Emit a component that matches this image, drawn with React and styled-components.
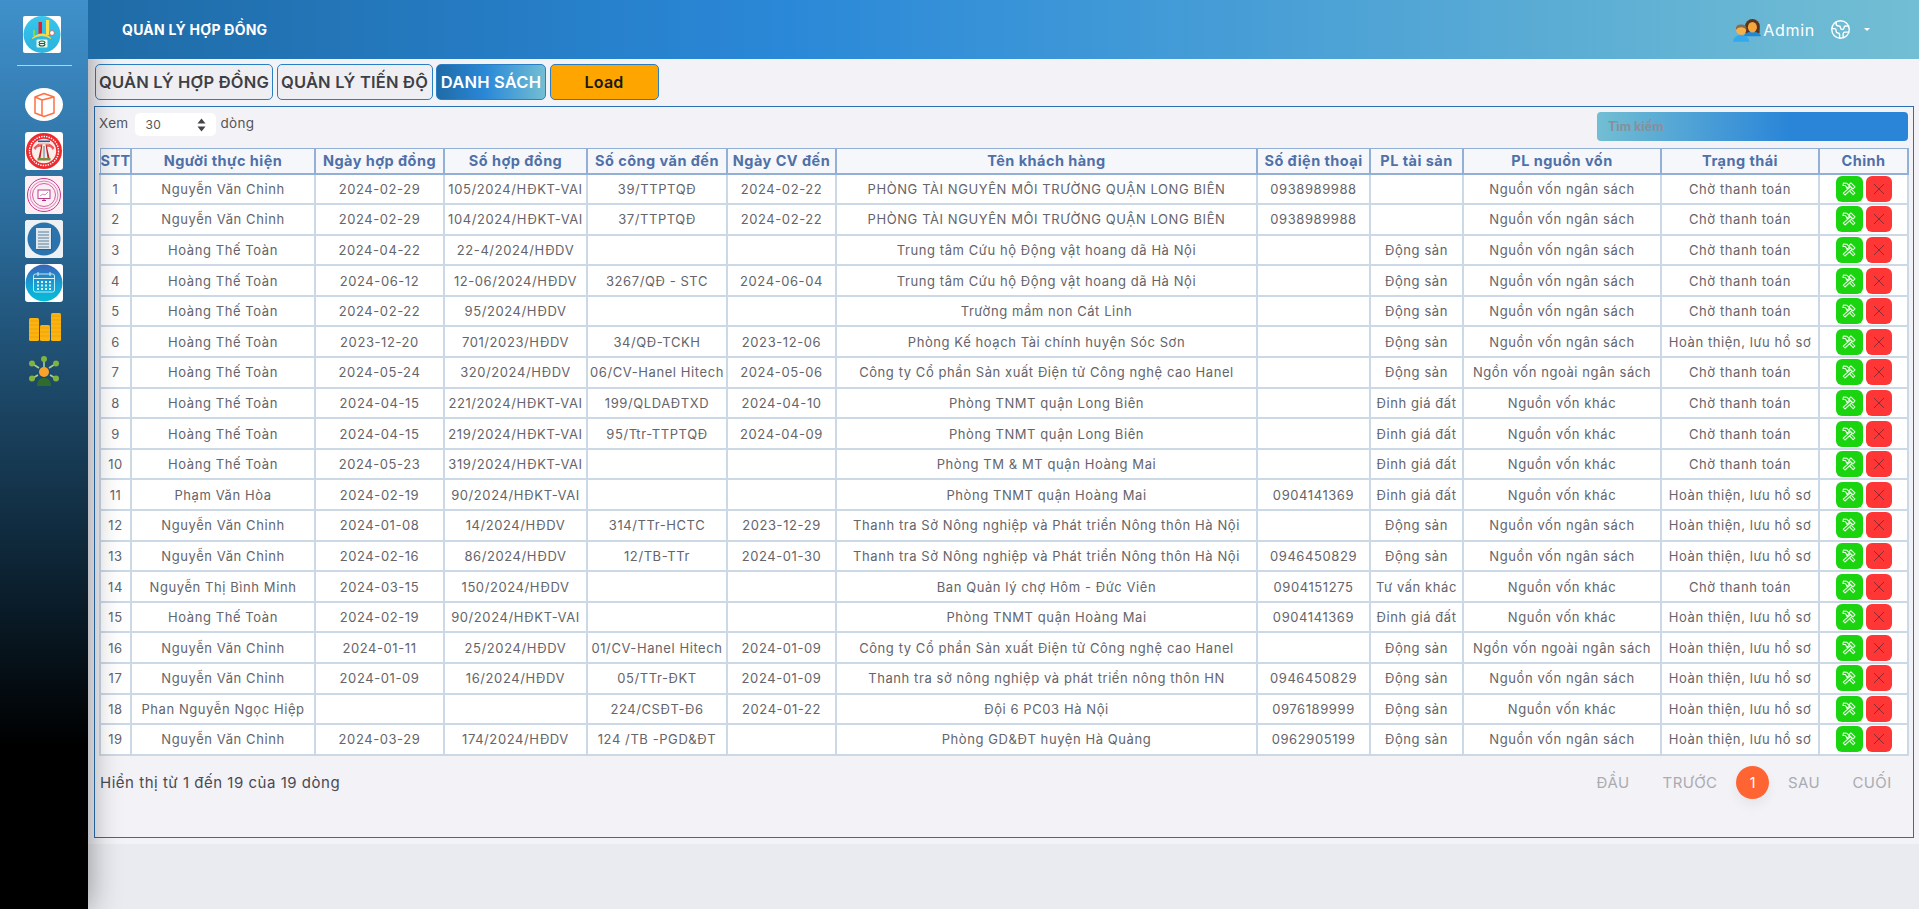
import React from "react";
import styled, { createGlobalStyle } from "styled-components";
import { Earth } from "lucide-react";

const Global = createGlobalStyle`
  html, body { margin: 0; padding: 0; background: #e9ebf0; }
  body { font-family: Inter, "Noto Sans", sans-serif; overflow: hidden; }
  * { box-sizing: border-box; }
`;

const Shell = styled.div`
  display: flex;
  width: 1919px;
  height: 909px;
  overflow: hidden;
`;

const Sidebar = styled.aside`
  width: 88px;
  flex: none;
  z-index: 2;
  display: flex;
  flex-direction: column;
  align-items: center;
  padding-top: 16px;
  background: linear-gradient(180deg, #3f90cb 0%, #2a6a99 25%, #1b4462 45%, #0b1f2d 65%, #000 82%);
  box-shadow: 0 0 32px rgba(0, 0, 0, 0.42);
`;

const Logo = styled.div`
  width: 38px;
  height: 37px;
  margin-right: 4px;
  background: #fff;
  border-radius: 2px;
  flex: none;
  svg { display: block; }
`;

const Divider = styled.hr`
  width: 55px;
  height: 1px;
  margin: 12px 0 22px;
  border: 0;
  background: #b5d3e8;
`;

const NavList = styled.nav`
  display: flex;
  flex-direction: column;
  align-items: center;
  gap: 6px;
`;

const NavTile = styled.div`
  width: 38px;
  height: ${(p) => p.$h || 38}px;
  border-radius: ${(p) => p.$round || "3px"};
  background: ${(p) => p.$bg || "#fff"};
  flex: none;
  margin-bottom: ${(p) => p.$mb || 0}px;
  svg { display: block; }
`;

const Main = styled.div`
  flex: 1;
  min-width: 0;
  display: flex;
  flex-direction: column;
`;

const Header = styled.header`
  height: 59px;
  flex: none;
  z-index: 3;
  display: flex;
  align-items: center;
  padding: 0 49px 0 34px;
  background: linear-gradient(90deg, #1f6ba6 0%, #2a88d8 38%, #72bed3 100%);
  color: #fff;
`;

const Title = styled.div`
  flex: 1;
  font-size: 14px;
  font-weight: 700;
  letter-spacing: 0.25px;
`;

const UserName = styled.span`
  font-size: 16px;
  letter-spacing: 0.7px;
  margin: 0 15px 0 2px;
`;

const Caret = styled.i`
  width: 0;
  height: 0;
  margin-left: 13px;
  border-left: 3px solid transparent;
  border-right: 3px solid transparent;
  border-top: 3px solid #fff;
`;

const Content = styled.main`
  height: 785px;
  flex: none;
  padding: 5px 5px 0 6px;
  background: #f2f2f7;
`;

const TabBar = styled.div`
  display: flex;
  gap: 3.5px;
  height: 36px;
  margin: 0 0 6px 1px;
`;

const Tab = styled.button`
  width: ${(p) => p.$w}px;
  height: 36px;
  padding: 0;
  border: 1px solid #2a7fc4;
  border-radius: 5px;
  font-family: inherit;
  font-size: 16.5px;
  font-weight: 600;
  letter-spacing: 0.2px;
  white-space: nowrap;
  color: #3f3f46;
  background: #efeff3;
`;

const ActiveTab = styled(Tab)`
  color: #fff;
  border-color: #2a7fc4;
  background: linear-gradient(90deg, #1f6ba6 0%, #2a88d8 45%, #72bed3 100%);
`;

const LoadButton = styled(Tab)`
  font-size: 16px;
  color: #1a1a1a;
  background: #ffa500;
`;

const Panel = styled.section`
  height: 732px;
  border: 1px solid #2a6fb0;
  padding: 5px 5px 0 4px;
  display: flex;
  flex-direction: column;
`;

const TopRow = styled.div`
  display: flex;
  justify-content: space-between;
  height: 30px;
  margin-bottom: 6px;
`;

const LengthControl = styled.label`
  display: flex;
  align-items: flex-start;
  gap: 4px;
  padding-top: 1px;
  color: #555;
  font-size: 13.5px;
  letter-spacing: 0.3px;
  line-height: 20px;
`;

const FakeSelect = styled.span`
  width: 81px;
  height: 23px;
  margin: 0 0 0 3px;
  padding: 0 10px;
  display: flex;
  align-items: center;
  justify-content: space-between;
  background: #fff;
  border-radius: 5px;
  font-size: 12px;
  color: #555;
`;

const SearchInput = styled.input`
  width: 311px;
  height: 29px;
  padding: 0 11px;
  border: 0;
  border-radius: 4px;
  outline: none;
  font-family: inherit;
  font-size: 12.5px;
  font-weight: 700;
  background: linear-gradient(90deg, #72bed3 0%, #2a85d8 62%, #2a85d8 100%);
  &::placeholder { color: #8a8f99; opacity: 1; }
`;

const Table = styled.table`
  width: 1808px;
  table-layout: fixed;
  border-collapse: collapse;
  background: #fff;
`;

const HeadCell = styled.th`
  height: 25px;
  padding: 0;
  background: #f6f7fa;
  border: 2px solid #92b0d6;
  border-top-width: 1px;
  border-left-width: ${(p) => (p.$first ? 1 : 2)}px;
  font-size: 14.5px;
  font-weight: 700;
  white-space: nowrap;
  text-align: center;
  color: #4f70a8;
  letter-spacing: 0.45px;
`;

const Row = styled.tr`
  height: 30.6px;
`;

const Cell = styled.td`
  padding: 0;
  border: 2px solid #cbd8e6;
  font-size: 13px;
  font-weight: 400;
  white-space: nowrap;
  text-align: center;
  color: #64646a;
  letter-spacing: 0.58px;
`;

const ActionWrap = styled.div`
  display: flex;
  justify-content: center;
  gap: 3px;
`;

const ActionBtn = styled.button`
  width: ${(p) => p.$w}px;
  height: 26px;
  padding: 0;
  border: 0;
  border-radius: 6px;
  display: flex;
  align-items: center;
  justify-content: center;
  background: ${(p) => p.$bg};
`;

const Footer = styled.div`
  display: flex;
  align-items: center;
  justify-content: space-between;
  margin-top: 7px;
  padding-left: 1px;
  height: 40px;
`;

const Info = styled.div`
  font-size: 15px;
  color: #4a4a52;
  letter-spacing: 0.52px;
`;

const Pager = styled.div`
  display: flex;
  align-items: center;
  margin-right: 1px;
`;

const PageLink = styled.span`
  width: ${(p) => p.$w}px;
  text-align: center;
  font-size: 15px;
  letter-spacing: 0.4px;
  color: #ababb0;
`;

const PageCurrent = styled.span`
  width: 33px;
  height: 33px;
  margin: 0 2px;
  border-radius: 50%;
  display: flex;
  align-items: center;
  justify-content: center;
  font-size: 14px;
  color: #fff;
  background: #ff6533;
  box-shadow: 0 6px 12px rgba(0, 0, 0, 0.06);
`;

const cols = [31, 184, 129, 143, 140, 109, 421, 113, 93, 198, 158, 89];
const heads = ["STT", "Người thực hiện", "Ngày hợp đồng", "Số hợp đồng", "Số công văn đến", "Ngày CV đến", "Tên khách hàng", "Số điện thoại", "PL tài sản", "PL nguồn vốn", "Trạng thái", "Chỉnh"];

const C = "Nguyễn Văn Chỉnh";
const T = "Hoàng Thế Toàn";
const NS = "Nguồn vốn ngân sách";
const NK = "Nguồn vốn khác";
const NN = "Ngồn vốn ngoài ngân sách";
const W = "Chờ thanh toán";
const H = "Hoàn thiện, lưu hồ sơ";
const DS = "Động sản";
const DG = "Đinh giá đất";
const LB = "PHÒNG TÀI NGUYÊN MÔI TRƯỜNG QUẬN LONG BIÊN";
const rows = [
  [C, "2024-02-29", "105/2024/HĐKT-VAI", "39/TTPTQĐ", "2024-02-22", LB, "0938989988", "", NS, W],
  [C, "2024-02-29", "104/2024/HĐKT-VAI", "37/TTPTQĐ", "2024-02-22", LB, "0938989988", "", NS, W],
  [T, "2024-04-22", "22-4/2024/HĐDV", "", "", "Trung tâm Cứu hộ Động vật hoang dã Hà Nội", "", DS, NS, W],
  [T, "2024-06-12", "12-06/2024/HĐDV", "3267/QĐ - STC", "2024-06-04", "Trung tâm Cứu hộ Động vật hoang dã Hà Nội", "", DS, NS, W],
  [T, "2024-02-22", "95/2024/HĐDV", "", "", "Trường mầm non Cát Linh", "", DS, NS, W],
  [T, "2023-12-20", "701/2023/HĐDV", "34/QĐ-TCKH", "2023-12-06", "Phòng Kế hoạch Tài chính huyện Sóc Sơn", "", DS, NS, H],
  [T, "2024-05-24", "320/2024/HĐDV", "06/CV-Hanel Hitech", "2024-05-06", "Công ty Cổ phần Sản xuất Điện tử Công nghệ cao Hanel", "", DS, NN, W],
  [T, "2024-04-15", "221/2024/HĐKT-VAI", "199/QLDAĐTXD", "2024-04-10", "Phòng TNMT quận Long Biên", "", DG, NK, W],
  [T, "2024-04-15", "219/2024/HĐKT-VAI", "95/Ttr-TTPTQĐ", "2024-04-09", "Phòng TNMT quận Long Biên", "", DG, NK, W],
  [T, "2024-05-23", "319/2024/HĐKT-VAI", "", "", "Phòng TM & MT quận Hoàng Mai", "", DG, NK, W],
  ["Phạm Văn Hòa", "2024-02-19", "90/2024/HĐKT-VAI", "", "", "Phòng TNMT quận Hoàng Mai", "0904141369", DG, NK, H],
  [C, "2024-01-08", "14/2024/HĐDV", "314/TTr-HCTC", "2023-12-29", "Thanh tra Sở Nông nghiệp và Phát triển Nông thôn Hà Nội", "", DS, NS, H],
  [C, "2024-02-16", "86/2024/HĐDV", "12/TB-TTr", "2024-01-30", "Thanh tra Sở Nông nghiệp và Phát triển Nông thôn Hà Nội", "0946450829", DS, NS, H],
  ["Nguyễn Thị Bình Minh", "2024-03-15", "150/2024/HĐDV", "", "", "Ban Quản lý chợ Hôm - Đức Viên", "0904151275", "Tư vấn khác", NK, W],
  [T, "2024-02-19", "90/2024/HĐKT-VAI", "", "", "Phòng TNMT quận Hoàng Mai", "0904141369", DG, NK, H],
  [C, "2024-01-11", "25/2024/HĐDV", "01/CV-Hanel Hitech", "2024-01-09", "Công ty Cổ phần Sản xuất Điện tử Công nghệ cao Hanel", "", DS, NN, H],
  [C, "2024-01-09", "16/2024/HĐDV", "05/TTr-ĐKT", "2024-01-09", "Thanh tra sở nông nghiệp và phát triển nông thôn HN", "0946450829", DS, NS, H],
  ["Phan Nguyễn Ngọc Hiệp", "", "", "224/CSĐT-Đ6", "2024-01-22", "Đội 6 PC03 Hà Nội", "0976189999", DS, NK, H],
  [C, "2024-03-29", "174/2024/HĐDV", "124 /TB -PGD&ĐT", "", "Phòng GD&ĐT huyện Hà Quảng", "0962905199", DS, NS, H],
];

const LogoIcon = () => (
  <svg width="38" height="37" viewBox="0 0 38 37">
    <defs>
      <linearGradient id="lg" x1="0" y1="0" x2="0" y2="1">
        <stop offset="0" stopColor="#38c6ee" />
        <stop offset="1" stopColor="#26b4e0" />
      </linearGradient>
    </defs>
    <circle cx="19" cy="18.5" r="18.5" fill="url(#lg)" />
    <rect x="10" y="14" width="2" height="6" fill="#7ed957" />
    <rect x="15.5" y="6" width="3.5" height="13" fill="#e3202a" />
    <rect x="23" y="4" width="3.2" height="15" fill="#f7e04a" />
    <path d="M9 22 Q19 13 28 22 L28 23 Q19 17 9 23Z" fill="#f9d94a" />
    <circle cx="29" cy="17" r="2.4" fill="#fff" stroke="#d9534f" strokeWidth="0.8" />
    <path d="M7 23 H31 V30 Q25 36 19 36 Q13 36 7 30Z" fill="#2fb7df" />
    <rect x="13.5" y="23.5" width="11" height="8" rx="1" fill="#eaf7f0" />
    <path d="M16 27 a3 2 0 0 1 6 0 M22 28 a3 2 0 0 1-6 0 M16 27.5 H22" stroke="#14633c" strokeWidth="1.1" fill="none" />
  </svg>
);

const CubeIcon = () => (
  <svg width="38" height="33" viewBox="0 0 38 33">
    <g fill="none" stroke="#ff7043" strokeWidth="1.5" strokeLinejoin="round">
      <path d="M10 9 L19 5.5 L29 9 V25 L19 28.5 L10 25 Z" />
      <path d="M10 9 L17 12 V28 M17 12 L29 9" />
    </g>
  </svg>
);

const SealIcon = () => (
  <svg width="38" height="38" viewBox="0 0 38 38">
    <circle cx="19" cy="19" r="18" fill="#ee2a2f" />
    <circle cx="19" cy="19" r="14.5" fill="none" stroke="#fff" strokeWidth="1.4" strokeDasharray="1.4 1.1" />
    <circle cx="19" cy="19" r="12.2" fill="#fbeee8" />
    <path d="M8.5 16 Q13 10 17 12 L16 15 Q12 14 10.5 18Z M29.5 16 Q25 10 21 12 L22 15 Q26 14 27.5 18Z" fill="#ef5a5e" />
    <rect x="13" y="8.5" width="12" height="1.6" fill="#2456a6" />
    <path d="M14 11 H24 V12.4 H14Z" fill="#e8c9a0" />
    <path d="M16.5 12.5 L13.5 26 H15.5 L17.5 12.5Z M21.5 12.5 L24.5 26 H22.5 L20.5 12.5Z" fill="#c7202a" />
    <path d="M17.8 12.5 H18.6 L17.6 26 H16.4Z M20.2 12.5 H19.4 L20.4 26 H21.6Z" fill="#f4e6c8" />
    <path d="M18.6 14 H19.4 V26 H18.6Z" fill="#2456a6" />
    <path d="M12.5 26 H25.5 V28.5 H12.5Z" fill="#6f8f4a" />
    <circle cx="19" cy="27.2" r="1.3" fill="#b5762a" />
  </svg>
);

const TrainingIcon = () => (
  <svg width="38" height="38" viewBox="0 0 38 38">
    <rect width="38" height="38" rx="3" fill="#fdeef4" />
    <g fill="none" stroke="#c43a8b">
      <circle cx="19" cy="19" r="16.5" strokeWidth="1" />
      <circle cx="19" cy="19" r="14" strokeWidth="0.6" />
      <circle cx="19" cy="19" r="11.5" strokeWidth="0.8" />
    </g>
    <rect x="13" y="14" width="12" height="8.5" fill="#fff" stroke="#b02a7f" strokeWidth="0.9" />
    <path d="M15 20 L18 18 L20 19 L23 16" fill="none" stroke="#d24b9a" strokeWidth="0.7" />
    <path d="M17 24.5 H21 M19 22.5 V24.5" stroke="#b02a7f" strokeWidth="1" />
  </svg>
);

const DocIcon = () => (
  <svg width="38" height="38" viewBox="0 0 38 38">
    <rect width="38" height="38" rx="3" fill="#eef1f4" />
    <circle cx="19" cy="19" r="16.5" fill="#2a73ad" />
    <rect x="12" y="9" width="15" height="21" fill="#2f5f86" />
    <rect x="11" y="8" width="15" height="21" fill="#dfe8ef" />
    <path d="M13 12 H24 M13 15 H24 M13 18 H24 M13 21 H24 M13 24 H24 M13 27 H24" stroke="#5c7f9a" strokeWidth="1.1" />
  </svg>
);

const CalendarIcon = () => (
  <svg width="38" height="38" viewBox="0 0 38 38">
    <defs>
      <linearGradient id="cg" x1="0" y1="0" x2="0" y2="1">
        <stop offset="0" stopColor="#3b63b8" />
        <stop offset="0.6" stopColor="#12a6d6" />
        <stop offset="1" stopColor="#06bcd6" />
      </linearGradient>
    </defs>
    <circle cx="19" cy="19" r="18.5" fill="url(#cg)" />
    <rect x="8.5" y="10" width="21" height="18" rx="2" fill="none" stroke="#bfe9f2" strokeWidth="1" />
    <path d="M8.5 14.5 H29.5 M13 8 V12 M25 8 V12" stroke="#d8f3f8" strokeWidth="1" />
    <g fill="#d8f3f8">
      {[17, 20.5, 24].map((y) =>
        [12, 16, 20, 24].map((x) => <rect key={`${x}-${y}`} x={x} y={y} width="2" height="2" />)
      )}
    </g>
  </svg>
);

const CoinsIcon = () => (
  <svg width="38" height="28" viewBox="0 0 38 28">
    <g fill="#fbb40f">
      <rect x="4" y="5" width="10" height="23" rx="1.5" />
      <rect x="15" y="12" width="10" height="16" rx="1.5" />
      <rect x="26" y="0" width="10" height="28" rx="1.5" />
    </g>
    <g stroke="#e8960a" strokeWidth="0.6">
      <path d="M4 8 H14 M4 12 H14 M4 16 H14 M4 20 H14 M4 24 H14" />
      <path d="M15 15 H25 M15 19 H25 M15 23 H25" />
      <path d="M26 3 H36 M26 7 H36 M26 11 H36 M26 15 H36 M26 19 H36 M26 23 H36" />
    </g>
  </svg>
);

const NetworkIcon = () => (
  <svg width="38" height="30" viewBox="0 0 38 30">
    <g stroke="#a8cf8e" strokeWidth="1.6">
      <path d="M19 3 V11 M7 7.5 L14 12 M31 7.5 L24 12 M7 22.5 L13 19 M31 22.5 L25 19" />
    </g>
    <g fill="#7fb23f">
      <circle cx="19" cy="3" r="3" />
      <circle cx="7" cy="7.5" r="3" />
      <circle cx="31" cy="7.5" r="3" />
      <circle cx="7" cy="22.5" r="3" />
      <circle cx="31" cy="22.5" r="3" />
    </g>
    <circle cx="19" cy="16" r="5" fill="#f9a32b" />
    <path d="M12 30 Q12 22 19 22 Q26 22 26 30Z" fill="#2f6b2a" />
  </svg>
);

const AvatarsIcon = () => (
  <svg width="28" height="24" viewBox="0 0 31 26">
    <circle cx="21.5" cy="9" r="8.2" fill="#5c3418" />
    <rect x="13.5" y="9" width="16" height="9" rx="3" fill="#5c3418" />
    <path d="M12 20 Q13 15 21.5 15 Q30 15 31 20Z" fill="#1f87d6" />
    <ellipse cx="21.5" cy="10" rx="5" ry="5.8" fill="#f7a63e" />
    <path d="M0 26 Q1 18.5 9 18.5 Q17 18.5 18 26Z" fill="#34a8ee" />
    <circle cx="9" cy="13" r="5.6" fill="#f7b04e" />
    <path d="M3.2 13 Q2.6 7 9 7 Q15.4 7 14.8 13 Q13 9.8 9 10 Q5 9.8 3.2 13Z" fill="#8a6a4c" />
  </svg>
);

const ToolIcon = () => (
  <svg width="14" height="14" viewBox="0 0 14 14">
    <g fill="#19d40f" stroke="#e8ffe4" strokeWidth="1.05" strokeLinejoin="round">
      <path d="M4.4 5.6 L6 4 L12.9 11 L11.2 12.7 Z" />
      <path d="M1.4 1.1 L5 1.3 L7.6 3.9 L5.3 6.2 L3.4 3.6 L0.9 3.4 Z" />
      <path d="M9.1 4.3 L10.6 5.9 L3 13 L1.2 11.2 Z" />
      <path d="M8.9 0.8 L13 4.9 L11 6.9 L6.9 2.8 Z" />
    </g>
  </svg>
);

const CloseIcon = () => (
  <svg width="12" height="12" viewBox="0 0 12 12">
    <path d="M1 1 L11 11 M11 1 L1 11" stroke="#8c2c34" strokeWidth="1" />
  </svg>
);

const UpDown = () => (
  <svg width="9" height="14" viewBox="0 0 9 14">
    <path d="M4.5 0.5 L8.5 5.5 H0.5Z M4.5 13.5 L8.5 8.5 H0.5Z" fill="#444" />
  </svg>
);

export default function App() {
  return (
    <Shell>
      <Global />
      <Sidebar>
        <Logo><LogoIcon /></Logo>
        <Divider />
        <NavList>
          <NavTile $h={33} $round="50% / 50%" $mb={5}><CubeIcon /></NavTile>
          <NavTile><SealIcon /></NavTile>
          <NavTile><TrainingIcon /></NavTile>
          <NavTile><DocIcon /></NavTile>
          <NavTile $mb={5}><CalendarIcon /></NavTile>
          <NavTile $h={28} $bg="transparent" $mb={9}><CoinsIcon /></NavTile>
          <NavTile $h={30} $bg="transparent"><NetworkIcon /></NavTile>
        </NavList>
      </Sidebar>
      <Main>
        <Header>
          <Title>QUẢN LÝ HỢP ĐỒNG</Title>
          <AvatarsIcon />
          <UserName>Admin</UserName>
          <Earth size={21} strokeWidth={1.6} color="#fff" />
          <Caret />
        </Header>
        <Content>
          <TabBar>
            <Tab $w={178}>QUẢN LÝ HỢP ĐỒNG</Tab>
            <Tab $w={156}>QUẢN LÝ TIẾN ĐỘ</Tab>
            <ActiveTab $w={110}>DANH SÁCH</ActiveTab>
            <LoadButton $w={109}>Load</LoadButton>
          </TabBar>
          <Panel>
            <TopRow>
              <LengthControl>
                Xem
                <FakeSelect>30 <UpDown /></FakeSelect>
                dòng
              </LengthControl>
              <SearchInput placeholder="Tìm kiếm" />
            </TopRow>
            <Table>
              <colgroup>
                {cols.map((w, i) => <col key={i} style={{ width: w }} />)}
              </colgroup>
              <thead>
                <tr>
                  {heads.map((h, i) => <HeadCell key={h} $first={i === 0}>{h}</HeadCell>)}
                </tr>
              </thead>
              <tbody>
                {rows.map((r, i) => (
                  <Row key={i}>
                    <Cell>{i + 1}</Cell>
                    {r.map((v, j) => <Cell key={j}>{v}</Cell>)}
                    <Cell>
                      <ActionWrap>
                        <ActionBtn $w={27} $bg="#19d40f"><ToolIcon /></ActionBtn>
                        <ActionBtn $w={26} $bg="#ff3636"><CloseIcon /></ActionBtn>
                      </ActionWrap>
                    </Cell>
                  </Row>
                ))}
              </tbody>
            </Table>
            <Footer>
              <Info>Hiển thị từ 1 đến 19 của 19 dòng</Info>
              <Pager>
                <PageLink $w={66}>ĐẦU</PageLink>
                <PageLink $w={88}>TRƯỚC</PageLink>
                <PageCurrent>1</PageCurrent>
                <PageLink $w={66}>SAU</PageLink>
                <PageLink $w={70}>CUỐI</PageLink>
              </Pager>
            </Footer>
          </Panel>
        </Content>
      </Main>
    </Shell>
  );
}
